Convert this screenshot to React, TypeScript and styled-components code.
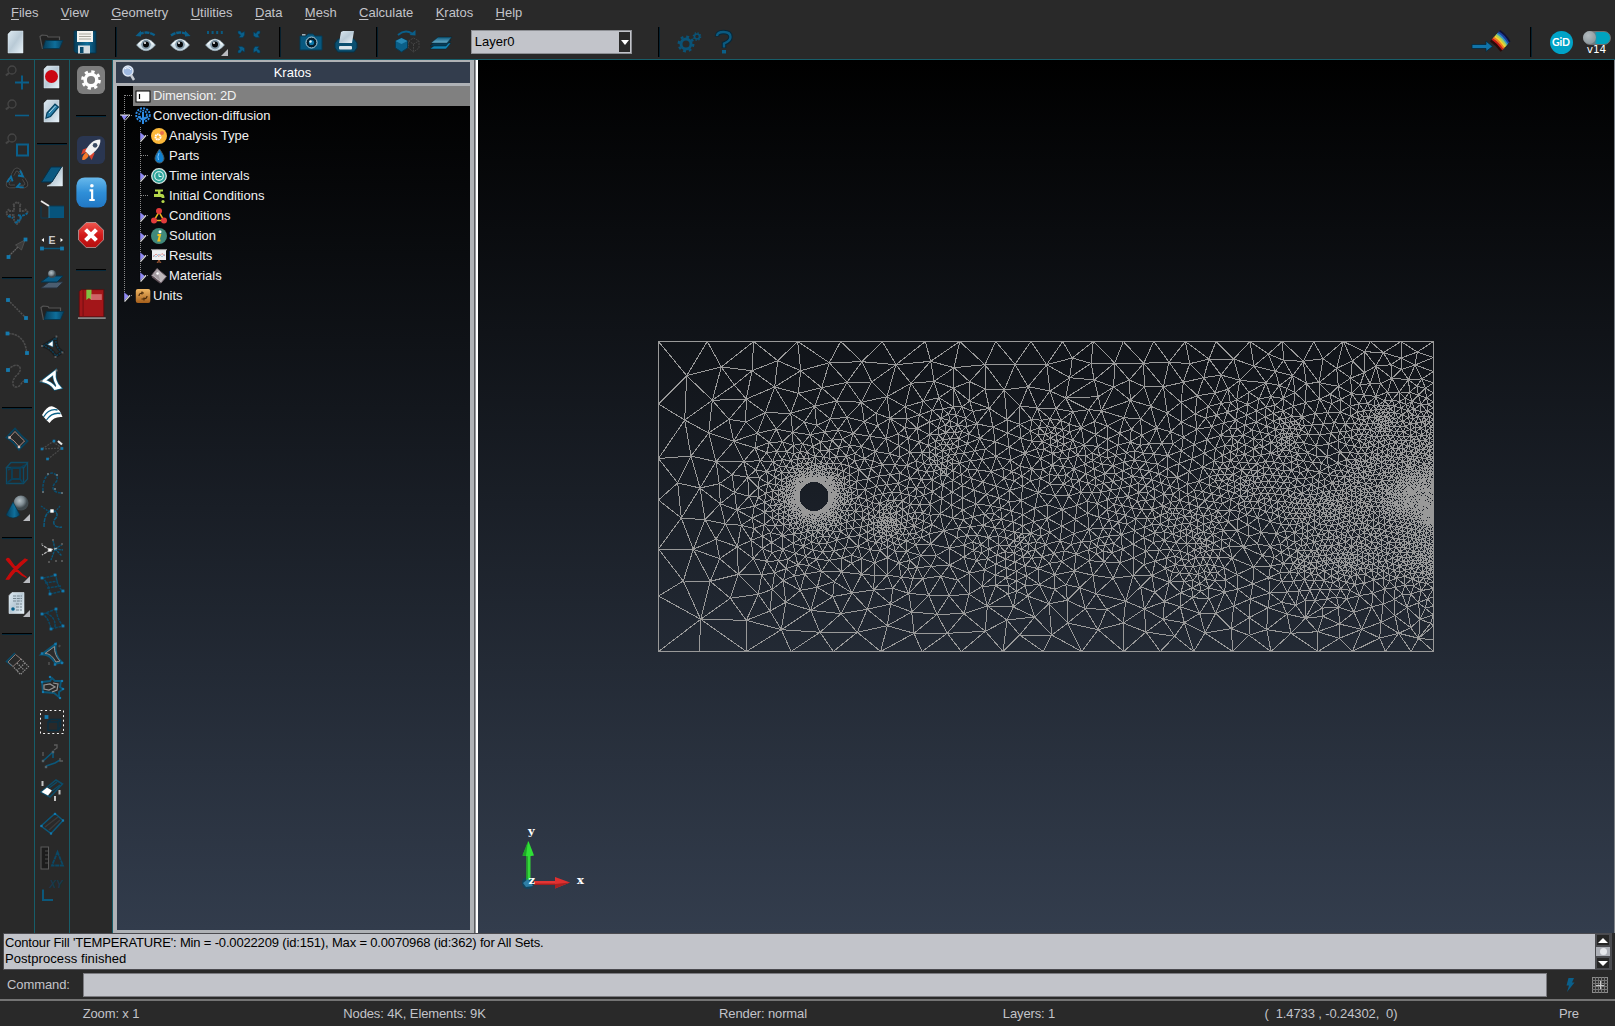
import React, { useMemo } from "react";
import styled, { createGlobalStyle } from "styled-components";

/* ------------------------------------------------------------------ */
/* Adaptive triangle mesh                                              */
/* ------------------------------------------------------------------ */

type P = [number, number];

const RECT = { x0: 658.5, y0: 341.5, x1: 1433.5, y1: 651.5 };
const HOLE = { x: 814, y: 496.5, r: 15 };

/* The domain is described in two patches, each in thirds of a pixel. */
const west = (p: number[]): P => [640 + p[0] / 3, 330 + p[1] / 3];
const east = (p: number[]): P => [1030 + p[0] / 3, 330 + p[1] / 3];

const chunk = (a: number[], n: number) => {
  const out: number[][] = [];
  for (let i = 0; i < a.length; i += n) out.push(a.slice(i, i + n));
  return out;
};

const TOP = [707.3, 753.7, 797.7, 840.7, 882.3, 925.3, 959.7, 995.7, 1031, 1062.7, 1093.3, 1123.3, 1153.7, 1185.3, 1216, 1250, 1282.3, 1313.7, 1343.3, 1370.3, 1401];
const BOTTOM = [699.3, 746.3, 791, 833.3, 880.7, 922, 961.3, 1003, 1043.3, 1081.7, 1123.7, 1160.3, 1193.7, 1232.7, 1271, 1318, 1352.3, 1385.3, 1411];
const LEFT = [404, 458.5, 500, 549, 596];

const NODES_WEST = [
  140,137,244,111,336,122,413,92,482,122,568,98,666,95,768,104,872,94,942,113,1035,104,1125,103,217,211,319,207,283,165,404,171,475,190,545,173,621,157,695,156,741,200,813,160,882,154,940,174,989,155,1035,177,1093,180,1164,170,134,270,206,309,267,268,317,276,376,248,452,250,524,229,590,213,664,217,708,250,750,265,795,230,850,214,897,203,940,230,989,213,1048,235,1140,228,1101,269,153,378,228,395,281,334,352,310,409,297,458,307,493,276,530,286,571,267,621,262,113,459,180,474,238,461,276,434,311,394,345,354,124,564,195,569,241,521,284,487,256,582,304,586,290,540,323,442,327,499,160,658,228,628,292,650,130,753,211,754,239,686,295,733,365,735,340,686,182,868,271,805,355,793,319,871,390,843,437,817,430,752,424,899,512,841,481,781,494,733,532,772,583,755,578,800,540,907,603,851,636,789,652,907,682,838,701,780,665,733,752,822,742,887,758,775,806,790,742,735,818,745,815,846,822,910,866,796,891,853,848,746,903,738,927,797,922,910,972,851,953,750,987,793,1042,828,1036,904,1139,915,1101,870,1120,831,1027,769,1067,767,1163,798,1104,792,
];
const NODES_EAST = [
  50,104,127,84,119,143,183,100,254,99,341,100,417,96,479,101,537,87,611,87,672,108,715,72,761,91,820,94,736,124,879,86,920,115,867,158,829,160,788,137,60,183,107,204,193,150,205,200,251,171,298,150,343,170,400,170,460,157,521,143,573,135,629,151,22,234,78,236,128,245,301,211,362,229,412,249,453,217,502,197,555,189,282,263,332,267,380,294,455,276,495,252,176,239,214,242,620,210,594,178,708,158,657,187,967,93,1004,65,1060,68,1038,108,1113,84,1162,66,1155,105,1003,128,
  14,861,57,821,65,915,113,879,112,811,149,773,166,836,198,791,204,899,230,838,287,814,280,879,332,770,343,837,348,906,374,787,403,815,400,868,451,830,463,878,434,919,487,803,509,850,525,909,537,806,557,850,584,786,604,896,611,828,661,807,658,863,657,916,710,899,714,833,720,789,771,852,783,910,797,825,826,865,863,905,879,859,928,882,928,925,926,832,972,847,995,898,1025,830,1053,877,1049,924,1095,857,1106,910,1142,893,1166,925,1186,835,1170,868,1202,880,
];

/* Target element size, as x, y, size triples. */
const SIZE_WEST = [
  745,575,3,750,610,4.2,700,580,5,790,570,5,650,540,6.5,700,520,6.5,780,500,7.5,820,520,9,810,620,7,750,540,4.3,700,640,8,640,620,9,640,580,8,840,440,7.5,900,400,4.5,920,370,5,940,330,5.5,900,330,6.5,950,400,7,880,450,7.5,950,270,8,870,270,11,820,330,10,830,380,9,740,340,13,700,300,15,620,380,10,690,400,11,700,450,10,760,430,11,1000,330,10,1050,300,14,1050,380,13,1000,430,10,1050,470,12,930,490,11,1000,520,12,900,580,11,900,650,15,1000,600,9,1000,660,9,1080,620,8,1100,560,9,1140,650,5.5,1100,680,9,1150,440,9,1130,380,12,1160,500,12,1170,700,9,950,700,15,850,690,11,780,690,11,700,690,12,600,670,12,540,640,8,480,650,8,430,700,11,400,640,11,370,590,9,370,520,9,390,450,8,400,390,10,430,330,11,480,350,9,530,330,11,580,310,11,640,300,12,
  200,150,40,150,300,40,100,500,40,200,450,30,290,500,20,200,650,40,300,700,25,250,850,45,450,850,35,600,850,34,800,850,34,1000,850,34,450,200,32,600,180,34,800,170,34,1000,160,30,350,250,24,270,380,26,650,780,30,850,780,30,1100,200,30,
];
const SIZE_EAST = [
  1200,560,2,1140,500,2.3,1190,500,2.2,1200,440,2.8,1100,500,3,1060,450,4.6,1190,380,4.2,1190,280,4.2,1200,220,6,1060,270,3.4,1060,240,4,1000,270,5.5,1040,330,5,1120,320,5,1120,250,5.5,980,220,9,1060,190,9,1190,180,10,1110,150,12,1030,130,14,1160,90,16,980,420,4.6,1000,500,4.4,920,520,4,850,540,4.5,780,540,5.5,920,440,6,1120,600,4.6,1050,600,5.6,950,620,5.6,850,620,6,1190,620,4,1190,690,3.2,1180,730,4.4,1120,700,4.8,1050,690,5.2,945,700,4,880,690,5.2,820,695,5,760,680,9,780,620,8,1190,790,9,1120,770,9,1030,790,10,940,770,9,860,780,9,780,770,11,1000,840,18,770,320,4.2,790,290,5,730,290,6.6,710,330,7,850,320,10,910,260,11,950,320,7,870,400,8.5,900,370,12,820,210,14,860,240,13,950,180,12,740,190,11,720,230,9,690,270,9,640,320,8.5,600,240,8.5,580,200,13,620,400,7,650,460,4.8,610,440,6.2,560,430,7,700,400,7.2,740,450,6.8,730,510,6.6,640,540,6.8,540,500,8,520,400,12,480,420,12,490,340,13,420,560,6,400,480,8.5,360,520,9,320,580,9,250,580,9,260,480,9,200,400,8,210,440,8,320,370,8.5,300,300,13,180,300,13,90,340,5.6,130,330,9,50,400,11,120,440,8.5,60,540,13,150,540,13,190,560,12,30,640,8.5,100,620,11,215,660,7.5,290,640,12,330,680,13,510,640,4.7,470,640,7,550,670,6.6,440,620,7.5,500,690,7.6,510,740,7,440,710,8.5,580,640,8.5,540,600,7,620,560,11,700,620,14,650,700,17,600,700,13,20,720,11,100,680,13,220,720,17,640,620,13,400,760,17,560,560,7,
  100,130,32,250,150,32,400,150,32,550,110,32,700,110,30,850,100,30,950,100,24,100,850,34,250,850,34,400,850,34,550,850,32,700,850,30,850,880,28,1000,890,26,1130,880,26,450,240,26,350,230,26,200,220,24,
];

const CONTROLS: number[][] = [
  ...chunk(SIZE_WEST, 3).map((c) => [...west(c), Math.log(c[2])]),
  ...chunk(SIZE_EAST, 3).map((c) => [...east(c), Math.log(c[2])]),
];

function sizeAt(x: number, y: number) {
  let sw = 0;
  let s = 0;
  for (const c of CONTROLS) {
    const d = (c[0] - x) ** 2 + (c[1] - y) ** 2 + 4;
    const w = 1 / (d * d);
    sw += w;
    s += w * c[2];
  }
  const d = Math.hypot(x - HOLE.x, y - HOLE.y) - HOLE.r;
  return Math.min(Math.exp(s / sw), 1.45 + 0.13 * d + 0.0018 * d * d);
}

function random(seed: number) {
  let a = seed;
  return () => {
    a = (a + 0x6d2b79f5) | 0;
    let t = Math.imul(a ^ (a >>> 15), 1 | a);
    t = (t + Math.imul(t ^ (t >>> 7), 61 | t)) ^ t;
    return ((t ^ (t >>> 14)) >>> 0) / 4294967296;
  };
}

function triangulate(pts: P[]): number[][] {
  const n = pts.length;
  const order = pts.map((_, i) => i).sort((i, j) => pts[i][0] - pts[j][0]);
  const all: P[] = [...pts, [-20000, -10000], [20000, -10000], [1000, 30000]];
  const circle = (a: number, b: number, c: number) => {
    const [ax, ay] = all[a];
    const bx = all[b][0] - ax;
    const by = all[b][1] - ay;
    const cx = all[c][0] - ax;
    const cy = all[c][1] - ay;
    const d = 2 * (bx * cy - by * cx) || 1e-12;
    const ux = (cy * (bx * bx + by * by) - by * (cx * cx + cy * cy)) / d;
    const uy = (bx * (cx * cx + cy * cy) - cx * (bx * bx + by * by)) / d;
    return { a, b, c, x: ax + ux, y: ay + uy, r: ux * ux + uy * uy };
  };
  let open = [circle(n, n + 1, n + 2)];
  const closed: typeof open = [];
  for (const i of order) {
    const [px, py] = all[i];
    const edges = new Map<number, number[]>();
    const keep: typeof open = [];
    const toggle = (a: number, b: number) => {
      const k = a < b ? a * 100000 + b : b * 100000 + a;
      if (edges.has(k)) edges.delete(k);
      else edges.set(k, [a, b]);
    };
    for (const t of open) {
      const dx = px - t.x;
      if (dx > 0 && dx * dx > t.r) {
        closed.push(t);
        continue;
      }
      const dy = py - t.y;
      if (dx * dx + dy * dy > t.r) {
        keep.push(t);
        continue;
      }
      toggle(t.a, t.b);
      toggle(t.b, t.c);
      toggle(t.c, t.a);
    }
    edges.forEach(([a, b]) => keep.push(circle(a, b, i)));
    open = keep;
  }
  return [...closed, ...open]
    .filter((t) => t.a < n && t.b < n && t.c < n)
    .map((t) => [t.a, t.b, t.c]);
}

function buildMesh(): string {
  const rnd = random(20);
  const pts: P[] = [];
  const CELL = 8;
  const grid = new Map<number, number[]>();
  const key = (cx: number, cy: number) => cx * 1000 + cy;
  const add = (p: P) => {
    const k = key(Math.floor(p[0] / CELL), Math.floor(p[1] / CELL));
    if (!grid.has(k)) grid.set(k, []);
    grid.get(k)!.push(pts.length);
    pts.push(p);
  };
  const free = (x: number, y: number, r: number) => {
    const x0 = Math.floor((x - r) / CELL);
    const x1 = Math.floor((x + r) / CELL);
    const y0 = Math.floor((y - r) / CELL);
    const y1 = Math.floor((y + r) / CELL);
    for (let i = x0; i <= x1; i++)
      for (let j = y0; j <= y1; j++)
        for (const q of grid.get(key(i, j)) || [])
          if ((pts[q][0] - x) ** 2 + (pts[q][1] - y) ** 2 < r * r) return false;
    return true;
  };

  const { x0, y0, x1, y1 } = RECT;
  add([x0, y0]);
  add([x1, y0]);
  add([x0, y1]);
  add([x1, y1]);
  TOP.forEach((x) => add([x, y0]));
  BOTTOM.forEach((x) => add([x, y1]));
  LEFT.forEach((y) => add([x0, y]));
  for (let y = y0 + 16; y < y1 - 8; ) {
    add([x1, y]);
    y += Math.max(2, Math.min(14, sizeAt(x1, y)));
  }
  const ring = 64;
  for (let i = 0; i < ring; i++) {
    const a = (i / ring) * Math.PI * 2;
    const r = HOLE.r + rnd() * 0.01;
    add([HOLE.x + r * Math.cos(a), HOLE.y + r * Math.sin(a)]);
  }
  const solid = pts.length;
  chunk(NODES_WEST, 2).forEach((p) => add(west(p)));
  chunk(NODES_EAST, 2).forEach((p) => add(east(p)));
  const fixed = pts.length;

  const active = pts.map((_, i) => i);
  while (active.length) {
    const k = Math.floor(rnd() * active.length);
    const [bx, by] = pts[active[k]];
    const base = sizeAt(bx, by) * 0.86;
    let found = false;
    for (let t = 0; t < 24; t++) {
      const a = rnd() * Math.PI * 2;
      const d = base * (1 + rnd() * 0.35);
      const x = bx + Math.cos(a) * d;
      const y = by + Math.sin(a) * d;
      const r = sizeAt(x, y) * 0.86;
      const m = r * 0.6;
      if (x < x0 + m || x > x1 - m || y < y0 + m || y > y1 - m) continue;
      if (Math.hypot(x - HOLE.x, y - HOLE.y) < HOLE.r + 0.8) continue;
      if (!free(x, y, r)) continue;
      add([x, y]);
      active.push(pts.length - 1);
      found = true;
      break;
    }
    if (!found) {
      active[k] = active[active.length - 1];
      active.pop();
    }
  }

  let tris = triangulate(pts);
  for (let pass = 0; pass < 2; pass++) {
    const acc = pts.map(() => [0, 0, 0]);
    for (const t of tris)
      for (let e = 0; e < 3; e++) {
        const a = t[e];
        const b = t[(e + 1) % 3];
        acc[a][0] += pts[b][0];
        acc[a][1] += pts[b][1];
        acc[a][2]++;
      }
    for (let i = fixed; i < pts.length; i++)
      if (acc[i][2]) pts[i] = [acc[i][0] / acc[i][2], acc[i][1] / acc[i][2]];
    tris = triangulate(pts);
  }

  const seen = new Set<number>();
  let d = "";
  const f = (v: number) => v.toFixed(1);
  for (const t of tris) {
    const cx = (pts[t[0]][0] + pts[t[1]][0] + pts[t[2]][0]) / 3;
    const cy = (pts[t[0]][1] + pts[t[1]][1] + pts[t[2]][1]) / 3;
    if (Math.hypot(cx - HOLE.x, cy - HOLE.y) < HOLE.r - 0.05) continue;
    for (let e = 0; e < 3; e++) {
      const a = Math.min(t[e], t[(e + 1) % 3]);
      const b = Math.max(t[e], t[(e + 1) % 3]);
      const k = a * 100000 + b;
      if (seen.has(k)) continue;
      seen.add(k);
      if (b < solid && pts[a][0] !== pts[b][0] && pts[a][1] === pts[b][1]) continue;
      d += `M${f(pts[a][0])} ${f(pts[a][1])}L${f(pts[b][0])} ${f(pts[b][1])}`;
    }
  }
  return d;
}

/* ------------------------------------------------------------------ */
/* Icons                                                               */
/* ------------------------------------------------------------------ */

const T = "#0a5f8a";

const dots = (list: number[], r = 1.3, fill = "#1479ad") =>
  chunk(list, 2).map((p, i) => <rect key={i} x={p[0] - r} y={p[1] - r} width={r * 2} height={r * 2} fill={fill} />);

const Eye = () => (
  <g>
    <path d="M2.500 15Q12 3 21.500 15Q12 26.500 2.500 15Z" fill="#cfdfe8" stroke="#8fa6b3" strokeWidth=".6" />
    <path d="M4.500 14.500Q12 6 19.500 14.500" fill="none" stroke="#f4f9fb" strokeWidth="1.300" />
    <circle cx="12" cy="14.600" r="4.800" fill="#8299a8" />
    <circle cx="12" cy="14.600" r="3" fill="#05080a" />
    <circle cx="11" cy="13" r="1" fill="#fff" />
  </g>
);
const Corner = <path d="M25 19V26H18Z" fill="#b9bbc0" />;
const Magnifier = (
  <g fill="none" stroke="#454545">
    <circle cx="7" cy="5" r="4" strokeWidth="1.300" />
    <path d="M4 8L.8 10.500" strokeWidth="2.200" />
  </g>
);
const page = (
  <path d="M7 1H19V23H4V4Z" fill="url(#paper)" stroke="#dfeaf0" strokeWidth=".5" />
);
const folder = (
  <g>
    <path d="M3.500 19L1 6.500L3 5L8 5.500L9 7H20.500V10" fill="#222" stroke="#565656" strokeWidth="1.200" />
    <path d="M4 18.500L6.500 10.500H24L20.500 18.500Z" fill="url(#teal)" stroke="#05334a" strokeWidth=".8" />
  </g>
);
const gearShape = (cx: number, cy: number, r: number, col: string, w: number) => (
  <g fill="none" stroke={col}>
    <circle cx={cx} cy={cy} r={r} strokeWidth={w} />
    <circle cx={cx} cy={cy} r={r + w * 0.75} strokeWidth={w * 0.8} strokeDasharray={`${(r + w * 0.75) * 0.393} ${(r + w * 0.75) * 0.3924}`} />
  </g>
);

const ICONS: Record<string, React.ReactNode> = {
  new: page,
  open: folder,
  save: (
    <g>
      <path d="M1 1H23V23H3L1 21Z" fill="url(#teal)" stroke="#04334a" strokeWidth=".8" />
      <rect x="4" y="1" width="16" height="11" fill="#f4f4f0" />
      <path d="M6 4H18M6 6.500H18M6 9H18" stroke="#a5a59c" strokeWidth="1.200" />
      <rect x="5" y="15.500" width="12" height="8" fill="#d3dce1" />
      <rect x="7" y="17" width="3.500" height="6" fill="#0a4b6d" />
    </g>
  ),
  eyeBack: (
    <g>
      <Eye />
      <path d="M5 4.500Q13 0 21 5.500" fill="none" stroke={T} strokeWidth="2.400" strokeDasharray="5 .8" />
      <path d="M1.500 6L7 .5V6.500Z" fill={T} />
    </g>
  ),
  eyeFwd: (
    <g>
      <Eye />
      <path d="M3 5.500Q11 0 19 4.500" fill="none" stroke={T} strokeWidth="2.400" strokeDasharray="5 .8" />
      <path d="M22.500 6L17 .5V6.500Z" fill={T} />
    </g>
  ),
  eyeDots: (
    <g>
      <Eye />
      <path d="M4 2.500H21" stroke="#0a5a80" strokeWidth="3" strokeDasharray="2 2.600" />
      {Corner}
    </g>
  ),
  expand: (
    <g fill={T} stroke="#053b55" strokeWidth=".6">
      {[0, 90, 180, 270].map((a) => (
        <path key={a} transform={`rotate(${a} 12 12)`} d="M1 1H3.500L4.500 3L7.500 1.500V5L6 7.500L2 7.500L3.500 5L1 3.500Z" />
      ))}
    </g>
  ),
  camera: (
    <g>
      <path d="M1 6H7L9 4H14L16 6H23V20H1Z" fill="#07587f" stroke="#053a55" />
      <rect x="3" y="4" width="3.500" height="1.500" fill="#9fb3bd" />
      <circle cx="12.500" cy="12.500" r="5.500" fill="#031e2d" stroke="#b8d4e2" strokeWidth="1" />
      <circle cx="12.500" cy="12.500" r="2.600" fill="#0a76a8" />
      <circle cx="11.500" cy="11.500" r="1.200" fill="#e6f5fb" />
    </g>
  ),
  print: (
    <g>
      <path d="M1 13L4 9H20L23 13V18L20 22H4L1 18Z" fill="#0a4f70" stroke="#053348" />
      <path d="M5 13L7 2L9 1H20L18 13Z" fill="url(#paper)" />
      <rect x="5" y="16" width="13" height="3.500" rx="1" fill="#dbe6ec" />
    </g>
  ),
  cubes: (
    <g>
      <path d="M3 5Q10 -1 17 3.500" fill="none" stroke={T} strokeWidth="2" />
      <path d="M20.500 5.500V0L14.500 5Z" fill={T} />
      <path d="M6.500 8L12.500 11V18L6.500 22L.5 18V11Z" fill="#0a5f88" stroke="#053a55" />
      <path d="M6.500 8L12.500 11L6.500 14L.5 11Z" fill="#2787b3" />
      <path d="M18.500 8L24 11V18L18.500 22L13.500 18V11L18.500 8M13.500 11L18.500 14L24 11M18.500 14V22" fill="none" stroke="#444" strokeDasharray="2 .8" />
    </g>
  ),
  layers: (
    <g stroke="#07222f" strokeWidth=".5">
      <path d="M1 19L8 13H22L17 19Z" fill="#1283b3" />
      <path d="M1 16L8 10H22L17 16Z" fill="#063c58" />
      <path d="M2 13L9 7H23L18 13Z" fill="url(#tealLight)" />
    </g>
  ),
  gears: (
    <g>
      {gearShape(9, 14, 5, "#0a5377", 3)}
      {gearShape(20, 6.500, 2.500, "#0a5377", 1.600)}
    </g>
  ),
  help: (
    <g>
      <path d="M6 6.500Q6 2 12.500 2Q19.500 2 19.500 7Q19.500 11 13 13.500V18" fill="none" stroke="#06283a" strokeWidth="4.400" />
      <path d="M6 6Q6 2 12.500 2Q19.500 2 19.500 7Q19.500 11 13 13.500V17.500" fill="none" stroke="#0b5a80" strokeWidth="2.400" />
      <rect x="11" y="20" width="4" height="3.500" fill="#0b5f88" />
    </g>
  ),
  zoomIn: <g>{Magnifier}<path d="M17 10.500V24.500M10 17.500H24" stroke={T} strokeWidth="1.900" /></g>,
  zoomOut: <g>{Magnifier}<path d="M10 16.500H24" stroke={T} strokeWidth="1.600" /></g>,
  zoomBox: <g>{Magnifier}<rect x="12" y="11.500" width="11" height="11" fill="none" stroke={T} strokeWidth="2" /></g>,
  recycle: (
    <g fill="none">
      {[0, 120, 240].map((a) => (
        <g key={a} transform={`rotate(${a} 12 13)`}>
          <path d="M7.500 8L10 3.500Q12 1.500 14 3.500L16.500 7.500" stroke="#4c4c4c" strokeWidth="3.600" />
          <path d="M7.500 8L10 3.500Q12 1.500 14 3.500L16.500 7.500" stroke="#242424" strokeWidth="1.900" />
          <path d="M15 3.500L18 9.500L13 8.500" stroke="#0f6fa0" strokeWidth="1.900" />
        </g>
      ))}
    </g>
  ),
  rotate: (
    <g fill="none" strokeWidth="1.900">
      <path d="M8 4L12 1L16 4M9 9V4M15 9V4M9 15V20L12 23L15 20V14" stroke="#4c4c4c" strokeDasharray="2 .8" />
      <path d="M4 8L1 12L4 16M4 10H10M4 14H10M14 10H20M20 8L23.500 12" stroke="#4c4c4c" strokeDasharray="2 .8" />
      <path d="M13 14Q18 16 22.500 12M12 19Q16 21 16 15M3 15L8 17M10 22L14 20" stroke="#0d6593" strokeDasharray="3 1" />
    </g>
  ),
  vector: (
    <g>
      <path d="M4 20L13 11" stroke="#666" strokeWidth="1.200" strokeDasharray="2 .6" />
      <path d="M20 4L16.500 14L10.500 9Z" fill="#3a3a3a" stroke="#555" strokeWidth=".8" />
      {dots([20.500, 3.500, 3.500, 21], 1.9)}
    </g>
  ),
  line: <g><path d="M3 3L21 21" stroke="#505050" strokeWidth="1.500" strokeDasharray="2 1" />{dots([3, 3, 21, 21], 1.9)}</g>,
  arc: <g><path d="M3 2.500Q19 3 21.500 20" fill="none" stroke="#4c4c4c" strokeWidth="1.600" strokeDasharray="2.500 .8" />{dots([2.500, 2.500, 22, 22], 1.9)}</g>,
  spline: <g><path d="M3 5C12 -5 20 3 12 10C6 15 7 23 12 22S17 14 21 16" fill="none" stroke="#4c4c4c" strokeWidth="1.500" strokeDasharray="2.500 .8" />{dots([3, 5, 21, 16], 1.9)}</g>,
  surface: (
    <g fill="none">
      <path d="M10 1.500Q16 9 22.500 14L14 22.500Q8 14 1.500 10.500Z" stroke="#06435f" strokeWidth="1.800" />
      <path d="M10 4.500Q15 10 19.500 14L14 19.500Q9 13 4.500 10.500Z" stroke="#a88e88" strokeWidth="1" />
      {dots([4.500, 10.500, 14, 20], 1.2, "#d8c5bf")}
    </g>
  ),
  cube: (
    <g fill="none" stroke="#0e4b66" strokeWidth="1.300">
      <path d="M1.500 6.500L6 1.500H22.500L19 6.500ZM1.500 6.500V22.500H18.500V6.500M18.500 22.500L22.500 18V1.500" />
      <path d="M7 7H15V18H7ZM7 7L3 9M15 7L20 4M7 18L2 22M15 18L18 22" strokeWidth="1.800" stroke="#0b3f58" />
    </g>
  ),
  solids: (
    <g>
      <circle cx="16" cy="8" r="7.500" fill="url(#ball)" />
      <path d="M8 7L15 20Q8 26 1 20Z" fill="url(#teal)" stroke="#053248" strokeWidth=".6" />
      {Corner}
    </g>
  ),
  delete: (
    <g>
      <path d="M1.500 2.500Q3 0 5 3Q12 14 21.500 20.500Q13 17 1.500 2.500ZM20 2L22 3Q10 13 4 22L1.500 22Q8 11 20 2Z" fill="#c60b0b" stroke="#c60b0b" strokeWidth="1.300" />
      {Corner}
    </g>
  ),
  list: (
    <g>
      <path d="M7 1.500H19V22.500H4V4.500Z" fill="url(#paper)" stroke="#dfeaf0" strokeWidth=".6" />
      <path d="M8 5H17M8 7.500H17M8 10H17M11 13H17M11 16H17M11 19H17" stroke="#74858f" strokeWidth="1" strokeDasharray="3 .8" />
      <circle cx="8" cy="18" r="1.800" fill="#0a5f8a" />
      {Corner}
    </g>
  ),
  mesh: (
    <g fill="none">
      <path d="M10 1L1.500 9.500L7 14" stroke="#0b4b68" strokeWidth="1.600" />
      <path d="M10.500 2.500L3 10L8 14.500L16 7Z" stroke="#8a7a76" />
      <path d="M16 7L23.500 14.500L15.500 22.500L8 14.500M12 11L19.500 18.500M20 11L12 18.500" stroke="#8b8b8b" strokeWidth="1.200" strokeDasharray="1.500 1" />
    </g>
  ),
  record: <g>{page}<circle cx="11.500" cy="11.500" r="6.500" fill="#cb0612" /></g>,
  edit: (
    <g>
      {page}
      <path d="M7 14L15 5L18.500 8L10.500 17.500L6 19Z" fill="#2a80aa" stroke="#06415f" strokeWidth="1.200" />
      <path d="M9 14L15.500 7" stroke="#b9dcea" />
    </g>
  ),
  sheet: (
    <g>
      <path d="M11 20L20 4L22.500 3V22H7Z" fill="url(#paper)" stroke="#dfe8ee" strokeWidth=".5" />
      <path d="M1.500 18L11 3H21.500L12 18Z" fill="#0a5880" stroke="#04314a" />
    </g>
  ),
  plane: (
    <g>
      <rect x="9" y="8" width="15" height="12" fill="#07547c" />
      <path d="M1 8V20H9M9 8L24 8" stroke="#0a3b52" fill="none" />
      <path d="M1 3L9 8" stroke="#e8e8e8" strokeWidth="1.800" />
      <path d="M9 8V20" stroke="#2d7ca0" />
    </g>
  ),
  edge: (
    <g>
      <path d="M4 6V10L1.500 8ZM20.500 6V10L23 8Z" fill="#fff" />
      <text x="12" y="12" fontFamily="Liberation Sans, sans-serif" fontSize="10.500" fontWeight="700" fill="#c9c9c9" textAnchor="middle">E</text>
      <path d="M2 16.500H22" stroke="#0a5578" strokeWidth="1.500" />
      {dots([2, 16.500, 22, 16.500], 1.9)}
    </g>
  ),
  stack: (
    <g>
      <path d="M1 21L9 15H23L17 21Z" fill="#4b5d70" stroke="#26313c" />
      <path d="M1 15L9 9H23L17 15Z" fill="#0a5b85" stroke="#04344c" />
      <circle cx="12" cy="7" r="4" fill="url(#ball)" />
    </g>
  ),
  folder,
  node: (
    <g fill="none">
      <path d="M3 11L16 3Q15 12 22 17L16 21Q10 12 3 11" stroke="#1d1d1d" strokeWidth="3.500" />
      <path d="M3 11L16 3Q15 12 22 17L16 21Q10 12 3 11" stroke="#0b3e57" strokeWidth="1.400" strokeDasharray="2 1" />
      <path d="M13 5.500V12L7.500 9.500Z" fill="#fff" stroke="#0a5f8a" strokeWidth=".6" />
      {dots([2, 11, 16.500, 1.500, 22.500, 17.500, 15.500, 22], 1, "#5d5d5d")}
    </g>
  ),
  nodeBold: (
    <g fill="none">
      <path d="M14.500 3.500Q13.500 12 19.500 18.500L15 19.500Q11 13.500 3.500 12Z" stroke="#0e5e80" strokeWidth="4" />
      <path d="M14.500 3.500Q13.500 12 19.500 18.500L15 19.500Q11 13.500 3.500 12Z" stroke="#fff" strokeWidth="2.600" />
      <path d="M16 16L20 19L15.500 20.500Z" fill="#fff" />
      {dots([16.500, 1.500, 1.500, 12], 1, "#777")}
    </g>
  ),
  bands: (
    <g>
      <path d="M2 12Q8 1 14 4Q20 6 22.500 14Q14 13 9.500 20Q6 17 2 12Z" fill="#fff" />
      <path d="M3.500 14Q9 5 17.500 7M6.500 17Q12 9 20.500 10.500" fill="none" stroke="#0b6188" strokeWidth="1.300" />
    </g>
  ),
  angle: (
    <g fill="none">
      <path d="M2 12L22 11M13 5L22 11L8 22M14 4L2 12" stroke="#484848" strokeWidth="1.300" strokeDasharray="2 1" />
      <path d="M18 4L22 7.500" stroke="#e8e8e8" strokeWidth="2.200" />
      {dots([2, 12, 14, 4, 22, 11.500, 7.500, 22], 1.3)}
    </g>
  ),
  curveA: <g><path d="M3 20C2 8 8 2 12 2S20 8 15 12C10 18 15 22 22 22" fill="none" stroke="#0b4d6d" strokeWidth="1.500" strokeDasharray="3 1" />{dots([3, 21, 8, 3, 17, 4, 15, 18, 22, 22], 1, "#5d6a70")}</g>,
  curveB: (
    <g>
      <path d="M1 1L8 6H16L20 1" fill="none" stroke="#0b4d6d" strokeWidth="1.400" strokeDasharray="2 1" />
      <path d="M4 22C4 12 7 6 12 6S19 10 15 14C11 20 17 23 22 22" fill="none" stroke="#0b5b80" strokeWidth="1.500" strokeDasharray="4 .8" />
      {dots([12, 6], 1.7, "#fff")}
    </g>
  ),
  star: (
    <g>
      <path d="M15 10L23 5M15 10L22 17M15 10L13 1M15 10L11 21M15 10L23 11" stroke="#0b587b" strokeWidth="1.400" strokeDasharray="2.500 .8" />
      <path d="M10 11L2 6M10 11L2 16M10 11L18 9" stroke="#b5b5b5" strokeWidth="1.300" strokeDasharray="3 1" />
      {dots([10, 11], 1.6, "#fff")}
      {dots([2, 5, 13, 1, 22, 5, 9, 23, 22, 22, 16, 22], 1, "#555")}
    </g>
  ),
  strip: <g><path d="M3 5Q9 4 16 2Q17 14 23 18L10 21Q9 11 3 5ZM5 10L18 8M7 15L21 13" fill="none" stroke="#0b4865" strokeWidth="1.500" strokeDasharray="3 .8" />{dots([2, 5, 15, 2, 23, 18, 10, 21], 1.4)}</g>,
  stripCut: <g><path d="M3 7L16 2Q17 12 23 19L11 22Q9 12 3 7ZM6 6Q16 10 15 20" fill="none" stroke="#0b4865" strokeWidth="1.500" strokeDasharray="3 .8" />{dots([2, 7, 16, 2, 23, 19, 11, 22], 1.4)}</g>,
  tri: (
    <g fill="none">
      <path d="M15 3Q14 13 21 20L16 21Q10 12 3 12Z" stroke="#0b5677" strokeWidth="3" />
      <path d="M14.500 4.500Q14 13 20 19L16 20Q11 11 5 11.500Z" stroke="#8f8f8f" fill="#2b2b2b" />
      <path d="M19 5L20 3M9 20V23" stroke="#484848" strokeWidth="2" />
      {dots([15.500, 2, 2, 11.500, 22, 21, 15, 22.500], 1.2)}
    </g>
  ),
  triMix: (
    <g fill="none">
      <path d="M2 6L10 5L12 2L15 5H21L20 11L23 13L19 16V21L14 17L3 16Z" stroke="#0b5677" strokeWidth="1.900" />
      <path d="M4 9L10 8L15 11L9 14L4 13ZM13 7L18 8L17 14L12 16" stroke="#949494" strokeWidth="1.200" />
      {dots([2, 6, 10, 1, 22, 5, 23, 13, 3, 16, 20, 22], 1.1)}
    </g>
  ),
  select: (
    <g>
      <rect x=".5" y=".5" width="23" height="23" fill="none" stroke="#f5f5f5" strokeDasharray="2 2.600" />
      {dots([6.500, 7], 1.9)}
      <path d="M8 12L11 9.500H20.500V17L18 20.500H8ZM8 12H18V20M18 12L20.500 9.500" fill="none" stroke="#0b2f41" strokeWidth="1.500" />
    </g>
  ),
  numbers: (
    <g fill="none">
      <path d="M3 17L13 8V14M6 22L15 19L20 16" stroke="#0b587b" strokeWidth="1.600" />
      <path d="M3 8V12M14 1H17V4L14 6M20 14V17H23" stroke="#5c5c5c" strokeWidth="1.300" />
      {dots([3, 17, 13, 8, 6, 23], 1.2, "#54646c")}
    </g>
  ),
  normals: (
    <g>
      <path d="M1 14L16 2L22.500 6L10 19Z" fill="none" stroke="#0b4c69" strokeWidth="1.600" />
      <path d="M1.500 14L7 9.500L12 12.500L8 17.500Z" fill="#fff" />
      <path d="M9 10L17 4M12 13L20 7" stroke="#0b4c69" strokeWidth="1.300" />
      <path d="M2.500 3V8M19.500 12V16.500M15 18V23" stroke="#c4c4c4" strokeWidth="2" />
    </g>
  ),
  slab: <g><path d="M1 14L15 1.500L23 8.500L11 21.500Z" fill="none" stroke="#0b587b" strokeWidth="1.500" /><path d="M5 15L18 5M9 18L20 8" stroke="#3b3b3b" strokeWidth="1.500" />{dots([1.500, 14, 15, 2, 23, 8.500, 11, 21.500], 1.1)}</g>,
  ruler: (
    <g fill="none">
      <rect x="1" y="1" width="7.500" height="22" fill="#1c1c1c" stroke="#5a5a5a" />
      <path d="M5 5H8M5 9H8M5 13H8M5 17H8" stroke="#4c4c4c" />
      <path d="M17.500 6L23 19.500H12Z" stroke="#0b4865" strokeWidth="1.800" strokeDasharray="4 .6" />
    </g>
  ),
  axes: (
    <g>
      <path d="M3 9.500V20H13" fill="none" stroke="#0b587b" strokeWidth="2" />
      <text x="9.500" y="7.500" fontFamily="Liberation Sans, sans-serif" fontSize="10" fontStyle="italic" fontWeight="700" fill="#15394c">XY</text>
    </g>
  ),
  settings: (
    <g>
      <rect x="0" y="0" width="24" height="24" rx="5" fill="#7d7d7d" />
      {gearShape(12, 12, 5, "#fff", 3)}
    </g>
  ),
  rocket: (
    <g>
      <rect x="0" y="0" width="24" height="24" rx="5" fill="#2a3651" />
      <path d="M8 14L3.500 16L5 11.500L9 10ZM10 16L12.500 20.500L15 15L14 13Z" fill="#d9432f" />
      <path d="M7 13C10 7 14 3 20 3C20.500 9 16 13 11 17Z" fill="#f1f1f1" />
      <circle cx="15.500" cy="8" r="2" fill="#3b4b63" />
      <path d="M8 14L10 17Q8 21 4.500 20.500Q4 17 8 14Z" fill="#f57a2c" />
    </g>
  ),
  info: (
    <g>
      <rect x=".3" y=".3" width="23.400" height="23.400" rx="6.500" fill="url(#infoBg)" />
      <circle cx="12.300" cy="6.800" r="1.400" fill="#fff" />
      <path d="M10.500 10.300H12.500V17.500M10.300 17.800H14.500" stroke="#fff" strokeWidth="1.700" fill="none" />
    </g>
  ),
  stop: (
    <g>
      <path d="M7.500.5H16.500L23.500 7.500V16.500L16.500 23.500H7.500L.5 16.500V7.500Z" fill="url(#redBg)" stroke="#c9c1c1" strokeWidth=".6" />
      <path d="M7 7L17 17M17 7L7 17" stroke="#fff" strokeWidth="3.800" />
    </g>
  ),
  book: (
    <g>
      <path d="M2.500 2L4 .5H21.500V21.500H2.500Z" fill="#a31619" stroke="#5c0c0d" strokeWidth=".6" />
      <path d="M5.500 1V21.500" stroke="#7c1013" strokeWidth="1" />
      <path d="M8 .5H12V8.500L10 7L8 8.500Z" fill="#7fc241" />
      <rect x="11.500" y="4" width="8.500" height="4.500" fill="#d9777a" opacity=".8" />
      <path d="M1.500 22.500H23" stroke="#c9c9c9" strokeWidth=".8" />
    </g>
  ),
};

const IconSvg = styled.svg`
  display: block;
  overflow: visible;
  flex: none;
`;

const Icon = ({ name, size = 24 }: { name: string; size?: number }) => (
  <IconSvg width={size} height={size} viewBox="0 0 24 24">{ICONS[name]}</IconSvg>
);

const Defs = styled.svg`
  position: absolute;
  width: 0;
  height: 0;
`;

const Gradients = () => (
  <Defs>
    <defs>
      <linearGradient id="paper" x1="0" y1="0" x2="1" y2="1"><stop offset="0" stopColor="#dce9f1" /><stop offset=".5" stopColor="#b9cad6" /><stop offset="1" stopColor="#e8f2f8" /></linearGradient>
      <linearGradient id="teal" x1="0" y1="0" x2="1" y2="0"><stop offset="0" stopColor="#063b57" /><stop offset=".6" stopColor="#0f6f9b" /><stop offset="1" stopColor="#064060" /></linearGradient>
      <linearGradient id="tealLight" x1="0" y1="0" x2="0" y2="1"><stop offset="0" stopColor="#0a5578" /><stop offset="1" stopColor="#6eb3d0" /></linearGradient>
      <radialGradient id="ball" cx=".4" cy=".35"><stop offset="0" stopColor="#b5c0c6" /><stop offset=".6" stopColor="#7e8b92" /><stop offset="1" stopColor="#3f494e" /></radialGradient>
      <linearGradient id="infoBg" x1="0" y1="0" x2="0" y2="1"><stop offset="0" stopColor="#68b9ec" /><stop offset=".5" stopColor="#2f8fd8" /><stop offset="1" stopColor="#2177c4" /></linearGradient>
      <linearGradient id="redBg" x1="0" y1="0" x2="0" y2="1"><stop offset="0" stopColor="#f0574f" /><stop offset=".5" stopColor="#d31a1a" /><stop offset="1" stopColor="#b30f0f" /></linearGradient>
      <linearGradient id="gold" x1="0" y1="0" x2="0" y2="1"><stop offset="0" stopColor="#f0b764" /><stop offset="1" stopColor="#a65f1b" /></linearGradient>
    </defs>
  </Defs>
);

/* Icons of the model tree, 16 px */
const TREE_ICONS: Record<string, React.ReactNode> = {
  dimension: <g><rect x="1" y="3" width="14" height="11" fill="#fff" stroke="#000" /><path d="M4.500 6V11" stroke="#000" strokeWidth="1.200" /></g>,
  diffusion: (
    <g stroke="#2e8ce6" fill="none">
      <path d="M8 16V9M8 12L3 8.500M8 12L13 8.500M8 10V4" strokeWidth="2" />
      <circle cx="8" cy="7" r="6.800" strokeWidth="1.900" strokeDasharray="2 1.200" />
      <circle cx="8" cy="6.500" r="3.800" strokeWidth="1.700" strokeDasharray="1.700 1.100" />
    </g>
  ),
  analysis: <g><circle cx="8" cy="8" r="8" fill="#fbb83a" /><circle cx="7" cy="9" r="2.500" fill="none" stroke="#fff" strokeWidth="2" strokeDasharray="1.600 .5" /><circle cx="11" cy="5" r="2" fill="#e8704c" /></g>,
  parts: <g><path d="M8.500 1Q13 7.500 13 10.500A4.500 4.500 0 0 1 4 10.500Q4 7.500 8.500 1Z" fill="#0f7fd0" stroke="#4b5a5f" /><path d="M8 5Q6 9 7.500 12" stroke="#7cc8ff" fill="none" /></g>,
  time: <g><circle cx="8" cy="8" r="7.300" fill="#2aa198" stroke="#d7e5e2" strokeWidth="1.300" /><circle cx="8" cy="8" r="4.300" fill="none" stroke="#d0eeea" strokeWidth="1.200" /><path d="M8 5.500V8.500H10.500" stroke="#e8fffb" fill="none" /></g>,
  tap: <g fill="#b5d84a"><rect x="4" y="1.500" width="8" height="2" /><rect x="7" y="3" width="2.500" height="4" /><path d="M3 6H11Q13.500 6 13.500 10H10.500V9H3Z" /><circle cx="12" cy="13.500" r="1.600" /></g>,
  conditions: <g><path d="M8 4L3 12.500H13Z" fill="none" stroke="#e6b421" strokeWidth="1.500" /><circle cx="8" cy="3" r="3" fill="#e23b3b" /><circle cx="3" cy="12.500" r="3" fill="#e23b3b" /><circle cx="13" cy="12.500" r="3" fill="#e23b3b" /></g>,
  solution: <g><circle cx="8" cy="8" r="8" fill="#40897c" /><circle cx="9" cy="3.800" r="1.500" fill="#fff" /><path d="M6.500 7H9L7.500 12.500H9.500" fill="none" stroke="#f4c21d" strokeWidth="2" /></g>,
  results: <g><rect x="1" y="2" width="14" height="10" fill="#eef0f2" /><path d="M2 9L5 6L8 8.500L11 5.500L14 8" stroke="#e28d8a" fill="none" strokeWidth=".9" /><path d="M2 7L5 9L8 6L11 9L14 6" stroke="#8db9d8" fill="none" strokeWidth=".7" /><path d="M0 1.800H16" stroke="#cfcfcf" /><path d="M8 12V15M8 12L6 15M8 12L10 15" stroke="#a45a35" /></g>,
  materials: <g><path d="M6 .5L15.500 8.500L10 15L.5 7.500Z" fill="#bdb7bb" stroke="#6d5f68" /><path d="M.5 7.500L10 15L9 15.500L1 9.500Z" fill="#5f4f57" /><path d="M6 1L2 7L9 12.500Z" fill="#a39ba0" /><circle cx="6.500" cy="5.500" r="1.200" fill="#fff" /></g>,
  units: <g><rect x=".8" y="1" width="14.500" height="14" rx="2" fill="url(#gold)" /><path d="M4 8Q4 5 8 5H9M12 8Q12 11 8 11H6.500M7 3.500V6.500M9 9.500V12.500" fill="none" stroke="#4a2a0a" strokeWidth="1.200" /></g>,
};

/* ------------------------------------------------------------------ */
/* Layout                                                              */
/* ------------------------------------------------------------------ */

const GlobalStyle = createGlobalStyle`
  html, body { margin: 0; padding: 0; background: #292929; }
  body { overflow: hidden; }
  * { box-sizing: border-box; }
`;

const Window = styled.div`
  width: 1615px;
  height: 1026px;
  display: flex;
  flex-direction: column;
  background: #292929;
  color: #c3c4c9;
  font: 13px/16px "Liberation Sans", Arial, sans-serif;
  overflow: hidden;
`;

const MenuBar = styled.nav`
  height: 26px;
  display: flex;
  gap: 22.4px;
  padding: 5px 11px 0;
`;

const MenuItem = styled.span`
  display: block;
  white-space: nowrap;
  &::first-letter {
    text-decoration: underline;
    text-underline-offset: 2px;
  }
`;

const Toolbar = styled.div`
  height: 34px;
  display: flex;
  align-items: center;
  border-bottom: 1px solid #175d69;
  padding-bottom: 1px;
`;

const Cell = styled.div<{ $w?: number }>`
  width: ${(p) => p.$w ?? 34.3}px;
  flex: none;
  display: flex;
  justify-content: center;
  align-items: center;
`;

const Divider = styled.div<{ $m: string }>`
  width: 2px;
  height: 30px;
  flex: none;
  margin: ${(p) => p.$m};
  background: linear-gradient(90deg, #000 50%, #06202e 50%);
`;

const Combo = styled.div`
  width: 161px;
  height: 24px;
  flex: none;
  display: flex;
  border: 1px solid #8d8f94;
  background: #c2c4ca;
  color: #000;
`;

const ComboText = styled.div`
  flex: 1;
  padding: 3px 3px;
`;

const ComboArrow = styled.div`
  width: 13px;
  background: #292929;
  border-left: 1px solid #55565a;
  outline: 1px solid #c2c4ca;
  outline-offset: -1px;
  display: grid;
  place-items: center;
`;

const Spacer = styled.div`
  flex: 1;
`;

const Badge = styled.div`
  width: 23px;
  height: 23px;
  flex: none;
  border-radius: 50%;
  background: #00a3c7;
  color: #fff;
  font: 700 10.5px/23px Lato, sans-serif;
  text-align: center;
`;

const ToggleBox = styled.div`
  width: 28px;
  flex: none;
  margin: 0 4.500px 0 10px;
  text-align: center;
  color: #fff;
  font: 10.5px/9px "DejaVu Sans", sans-serif;
`;

const Track = styled.div`
  height: 14px;
  border-radius: 7px;
  background: linear-gradient(90deg, #6d7b82 40%, #00a3bf 50%);
  border: 1.5px solid #707070;
  display: flex;
`;

const Knob = styled.div`
  width: 13px;
  height: 13px;
  margin: -1px;
  border-radius: 50%;
  background: radial-gradient(circle at 40% 35%, #b3bcc0, #7f8b90);
`;

const Body = styled.div`
  flex: none;
  height: 873px;
  display: flex;
`;

const Rail = styled.div<{ $w: number }>`
  width: ${(p) => p.$w}px;
  flex: none;
  display: flex;
  flex-direction: column;
  align-items: center;
  border-right: 1px solid #175d69;
`;

const RailCell = styled.div<{ $h: number }>`
  height: ${(p) => p.$h}px;
  flex: none;
  display: flex;
  align-items: center;
`;

const RailDivider = styled.div<{ $h: number }>`
  width: 30px;
  height: ${(p) => p.$h}px;
  flex: none;
  display: flex;
  align-items: center;
  &::before {
    content: "";
    width: 100%;
    height: 2px;
    background: linear-gradient(#000 50%, #06293b 50%);
  }
`;

const Panel = styled.aside`
  width: 361px;
  flex: none;
  display: flex;
  flex-direction: column;
  padding: 2px 4px 3px 3px;
  background: #afb2b6;
`;

const PanelHeader = styled.header`
  height: 21px;
  flex: none;
  display: grid;
  grid-template-columns: 24px 1fr 25px;
  align-items: center;
  background: #333d4d;
  color: #fff;
  text-align: center;
  margin-bottom: 3px;
`;

const Tree = styled.div`
  flex: 1;
  margin-left: 1px;
  position: relative;
  background: linear-gradient(#000, #323c4c);
  color: #f1f1f1;
`;

const Row = styled.div<{ $depth: number }>`
  height: 20px;
  display: flex;
  align-items: center;
  padding-left: ${(p) => p.$depth * 16}px;
`;

const Twist = styled.div`
  width: 16px;
  height: 20px;
  flex: none;
`;

const RowBody = styled.div<{ $selected?: boolean }>`
  flex: 1;
  height: 20px;
  display: flex;
  align-items: center;
  gap: 2px;
  padding-left: 2px;
  letter-spacing: ${(p) => (p.$selected ? "-0.15px" : "0")};
  background: ${(p) => (p.$selected ? "#808080" : "transparent")};
`;

const Lines = styled.svg`
  position: absolute;
  left: 0;
  top: 0;
  pointer-events: none;
`;

const Sash = styled.div`
  width: 4px;
  flex: none;
  background: linear-gradient(90deg, #5b5d61 0 1px, #97999d 1px 2px, #fff 2px 4px);
`;

const Viewport = styled.main`
  flex: 1;
  min-width: 0;
  border-right: 1px solid #7d8288;
  background: linear-gradient(#000, #333d4d);
`;

const MessageRow = styled.div`
  height: 37px;
  flex: none;
  display: flex;
  margin: 0 3px;
  border: 1px solid #4b4b50;
  background: #c2c4ca;
  color: #000;
`;

const Messages = styled.div`
  flex: 1;
  padding: 1px;
  white-space: pre;
`;

const MessageLine = styled.div<{ $spacing: number }>`
  letter-spacing: ${(p) => p.$spacing}px;
`;

const ScrollBar = styled.div`
  width: 16px;
  background: #4a4b4f;
  display: flex;
  flex-direction: column;
  align-items: center;
  gap: 2px;
  padding-top: 1px;
`;

const ScrollBox = styled.div<{ $thumb?: boolean }>`
  width: ${(p) => (p.$thumb ? 14 : 12)}px;
  height: ${(p) => (p.$thumb ? 9 : 10)}px;
  background: ${(p) => (p.$thumb ? "#aeb1b8" : "#262626")};
  display: grid;
  place-items: center;
`;

const CommandRow = styled.div`
  height: 29px;
  flex: none;
  display: flex;
  align-items: center;
  padding: 0 7px;
`;

const CommandLabel = styled.label`
  width: 76px;
  letter-spacing: -0.1px;
`;

const CommandInput = styled.div`
  width: 1464px;
  height: 24px;
  background: #c2c4ca;
  border: 1px solid #7b7b80;
  margin-right: 18px;
`;

const CommandIcon = styled.svg`
  display: block;
  margin-right: 16px;
`;

const StatusBar = styled.footer`
  height: 27px;
  flex: none;
  display: flex;
  align-items: center;
  border-top: 2px solid #747474;
  padding: 1px 0 0 1px;
  letter-spacing: -0.12px;
`;

const StatusCell = styled.div<{ $w: number }>`
  width: ${(p) => p.$w}px;
  flex: none;
  text-align: center;
  white-space: pre;
`;

/* ------------------------------------------------------------------ */
/* Content                                                             */
/* ------------------------------------------------------------------ */

const MENUS = ["Files", "View", "Geometry", "Utilities", "Data", "Mesh", "Calculate", "Kratos", "Help"];

const RAIL_1 = ["zoomIn", "zoomOut", "zoomBox", "recycle", "rotate", "vector", "|", "line", "arc", "spline", "|", "surface", "cube", "solids", "|", "delete", "list", "|", "mesh"];
const RAIL_2 = ["record", "edit", "|", "sheet", "plane", "edge", "stack", "folder", "node", "nodeBold", "bands", "angle", "curveA", "curveB", "star", "strip", "stripCut", "tri", "triMix", "select", "numbers", "normals", "slab", "ruler", "axes"];

type Item = { label: string; icon: string; depth: number; state: "open" | "closed" | "leaf"; selected?: boolean };
const ITEMS: Item[] = [
  { label: "Dimension: 2D", icon: "dimension", depth: 0, state: "leaf", selected: true },
  { label: "Convection-diffusion", icon: "diffusion", depth: 0, state: "open" },
  { label: "Analysis Type", icon: "analysis", depth: 1, state: "closed" },
  { label: "Parts", icon: "parts", depth: 1, state: "leaf" },
  { label: "Time intervals", icon: "time", depth: 1, state: "closed" },
  { label: "Initial Conditions", icon: "tap", depth: 1, state: "leaf" },
  { label: "Conditions", icon: "conditions", depth: 1, state: "closed" },
  { label: "Solution", icon: "solution", depth: 1, state: "closed" },
  { label: "Results", icon: "results", depth: 1, state: "closed" },
  { label: "Materials", icon: "materials", depth: 1, state: "closed" },
  { label: "Units", icon: "units", depth: 0, state: "closed" },
];

const TreeLines = () => (
  <Lines width="48" height="220">
    <g stroke="#8a8a8a" strokeDasharray="1 1" fill="none" shapeRendering="crispEdges">
      <path d="M7.500 9V210M23.500 41V190" />
      {ITEMS.map((it, i) => (
        <path key={i} d={`M${it.depth * 16 + 8} ${i * 20 + 9.500}h8`} />
      ))}
    </g>
    {ITEMS.map((it, i) => {
      const x = it.depth * 16 + 7;
      const y = i * 20 + 10;
      if (it.state === "closed")
        return <g key={i}><path d={`M${x} ${y - 4}V${y + 5}L${x + 5} ${y}Z`} fill="#8f8af5" stroke="#000" strokeWidth=".4" /><path d={`M${x + .5} ${y + 5.500}L${x + 6} ${y - .5}`} stroke="#d9d9d9" strokeWidth="1.200" /></g>;
      if (it.state === "open")
        return <g key={i}><path d={`M${x - 3} ${y - 1}H${x + 4}L${x} ${y + 4}Z`} fill="#8f8af5" /><path d={`M${x - 4} ${y - 1}H${x + 6}L${x + 1} ${y + 4.500}`} stroke="#e5e5e5" fill="none" /></g>;
      return null;
    })}
  </Lines>
);

const BANDS = ["#0d1238", "#1b3fa0", "#3394c4", "#a8d060", "#f5d32c", "#ee7a24", "#c81c18", "#2b0a0a"];

const RainbowIcon = () => (
  <IconSvg width={40} height={26} viewBox="0 0 40 26">
    {BANDS.map((c, i) => (
      <path
        key={c}
        d={`M${28.500 - i * 1.250} ${2 + i * 1.350}Q${34 - i * 1.150} ${5 + i * 1.500} ${38.500 - i * 1.150} ${13 + i * 1.300}`}
        fill="none"
        stroke={c}
        strokeWidth="2.300"
      />
    ))}
    <path d="M1 15.500H15V12L21.500 17.500L15 22.500V19.500H1Z" fill="#1173a8" stroke="#042a3d" strokeWidth=".8" />
  </IconSvg>
);

const Scene = () => {
  const mesh = useMemo(buildMesh, []);
  return (
    <IconSvg width={1136} height={873} viewBox="478 60 1136 873">
      <g shapeRendering="crispEdges" stroke="#999" strokeWidth="1" fill="none">
        <path d={mesh} />
        <rect x={RECT.x0} y={RECT.y0} width={775} height={310} />
      </g>
      <g>
        <circle cx="528" cy="883" r="6" fill="#12445e" />
        <rect x="526.500" y="855" width="4" height="25" fill="#34d83a" />
        <rect x="526.500" y="855" width="1.300" height="25" fill="#1f9e26" />
        <path d="M528.500 841L534 855.500Q528.500 857 522.500 855.500Z" fill="#2fe036" />
        <path d="M528 841L526 856L522.500 855.500Z" fill="#1fa527" />
        <rect x="534" y="881" width="22" height="4" fill="#e23535" />
        <rect x="534" y="883.600" width="22" height="1.400" fill="#a32020" />
        <path d="M570 882.500L555 877V888.500Z" fill="#e03030" />
        <path d="M570 882.500L555 884V888.500Z" fill="#a82222" />
        <path d="M528 879L533 886L526 887L523 883Z" fill="#2e7ea6" />
        <g fill="#fff" fontFamily="DejaVu Serif, serif" fontWeight="700" fontSize="11.500">
          <text x="528" y="834.500">y</text>
          <text x="577" y="883.500">x</text>
          <text x="528.500" y="883.500">z</text>
        </g>
      </g>
    </IconSvg>
  );
};

export default function App() {
  return (
    <Window>
      <GlobalStyle />
      <Gradients />
      <MenuBar>
        {MENUS.map((m) => <MenuItem key={m}>{m}</MenuItem>)}
      </MenuBar>
      <Toolbar>
        <Cell $w={32}><Icon name="new" /></Cell>
        <Cell $w={37}><Icon name="open" /></Cell>
        <Cell $w={32}><Icon name="save" /></Cell>
        <Divider $m="0 12px 0 14px" />
        {["eyeBack", "eyeFwd", "eyeDots", "expand"].map((n) => <Cell key={n}><Icon name={n} /></Cell>)}
        <Divider $m="0 13px 0 13px" />
        <Cell><Icon name="camera" /></Cell>
        <Cell><Icon name="print" /></Cell>
        <Divider $m="0 12px 0 13px" />
        <Cell><Icon name="cubes" /></Cell>
        <Cell><Icon name="layers" /></Cell>
        <Cell $w={12.400} />
        <Combo>
          <ComboText>Layer0</ComboText>
          <ComboArrow>
            <IconSvg width={8} height={5}><path d="M0 0H8L4 5Z" fill="#fff" /></IconSvg>
          </ComboArrow>
        </Combo>
        <Divider $m="0 12px 0 26px" />
        <Cell><Icon name="gears" /></Cell>
        <Cell><Icon name="help" /></Cell>
        <Spacer />
        <RainbowIcon />
        <Divider $m="0 18px 0 19px" />
        <Badge>GiD</Badge>
        <ToggleBox>
          <Track><Knob /></Track>
          v14
        </ToggleBox>
      </Toolbar>

      <Body>
        <Rail $w={35}>
          {RAIL_1.map((n, i) => (n === "|" ? <RailDivider key={i} $h={27.500} /> : <RailCell key={i} $h={34.100}><Icon name={n} /></RailCell>))}
        </Rail>
        <Rail $w={35}>
          {RAIL_2.map((n, i) => (n === "|" ? <RailDivider key={i} $h={31} /> : <RailCell key={i} $h={34.100}><Icon name={n} /></RailCell>))}
        </Rail>
        <Rail $w={43}>
          <RailCell $h={40}><Icon name="settings" size={28} /></RailCell>
          <RailDivider $h={32} />
          <RailCell $h={36}><Icon name="rocket" size={28} /></RailCell>
          <RailCell $h={48}><Icon name="info" size={31} /></RailCell>
          <RailCell $h={38}><Icon name="stop" size={26} /></RailCell>
          <RailDivider $h={31} />
          <RailCell $h={38}><Icon name="book" size={31} /></RailCell>
        </Rail>

        <Panel>
          <PanelHeader>
            <IconSvg width={22} height={20} viewBox="0 0 22 20">
              <circle cx="12" cy="8" r="5" fill="#9fb9e0" stroke="#dfe8f5" strokeWidth="1.400" />
              <path d="M9 6Q12 3 15 7" fill="none" stroke="#fff" />
              <path d="M15 12L18 17" stroke="#c7ccd4" strokeWidth="2.500" />
            </IconSvg>
            <span>Kratos</span>
          </PanelHeader>
          <Tree>
            {ITEMS.map((it) => (
              <Row key={it.label} $depth={it.depth}>
                <Twist />
                <RowBody $selected={it.selected}>
                  <IconSvg width={16} height={16}>{TREE_ICONS[it.icon]}</IconSvg>
                  {it.label}
                </RowBody>
              </Row>
            ))}
            <TreeLines />
          </Tree>
        </Panel>
        <Sash />
        <Viewport><Scene /></Viewport>
      </Body>

      <MessageRow>
        <Messages>
          <MessageLine $spacing={-0.165}>Contour Fill 'TEMPERATURE': Min = -0.0022209 (id:151), Max = 0.0070968 (id:362) for All Sets.</MessageLine>
          <MessageLine $spacing={0.07}>Postprocess finished</MessageLine>
        </Messages>
        <ScrollBar>
          <ScrollBox><IconSvg width={10} height={5}><path d="M0 5H10L5 0Z" fill="#fff" /></IconSvg></ScrollBox>
          <ScrollBox $thumb><IconSvg width={7} height={7}><circle cx="3.500" cy="3.500" r="3.500" fill="#e6e8ec" /></IconSvg></ScrollBox>
          <ScrollBox><IconSvg width={10} height={5}><path d="M0 0H10L5 5Z" fill="#fff" /></IconSvg></ScrollBox>
        </ScrollBar>
      </MessageRow>
      <CommandRow>
        <CommandLabel>Command:</CommandLabel>
        <CommandInput />
        <CommandIcon width={11} height={16}><path d="M3.500 1H9L7 5.500H9.500L2 15L4 8.500H1.500Z" fill="#0a5f8a" /></CommandIcon>
        <IconSvg width={16} height={16} shapeRendering="crispEdges">
          <rect x=".5" y=".5" width="15" height="15" fill="#303030" stroke="#8a8a8a" />
          <path d="M3.500 0V16M6.500 0V16M9.500 0V16M12.500 0V16M0 3.500H16M0 6.500H16M0 9.500H16M0 12.500H16" stroke="#777" />
          <path d="M8 4V12M4 8H12" stroke="#c9c9c9" />
        </IconSvg>
      </CommandRow>
      <StatusBar>
        <StatusCell $w={220}>Zoom: x 1</StatusCell>
        <StatusCell $w={387}>Nodes: 4K, Elements: 9K</StatusCell>
        <StatusCell $w={310}>Render: normal</StatusCell>
        <StatusCell $w={222}>Layers: 1</StatusCell>
        <StatusCell $w={382}>{"(  1.4733 , -0.24302,  0)"}</StatusCell>
        <StatusCell $w={94}>Pre</StatusCell>
      </StatusBar>
    </Window>
  );
}
